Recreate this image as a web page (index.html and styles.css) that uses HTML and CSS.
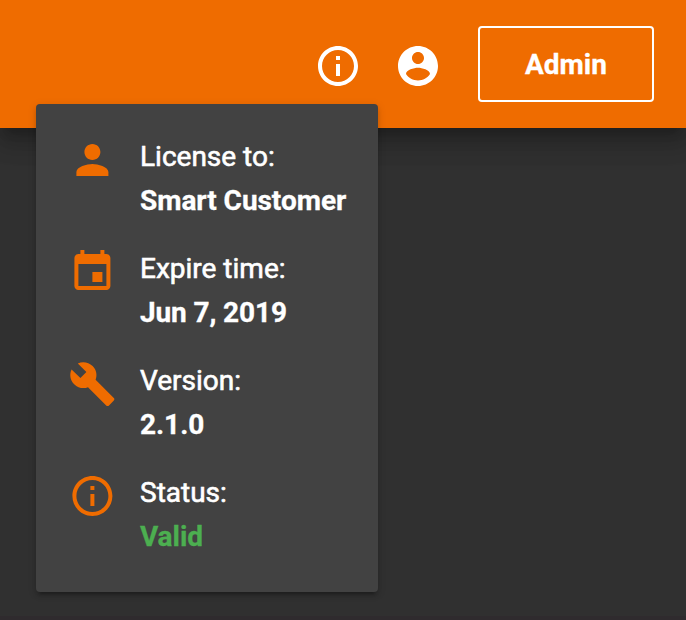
FILE: index.html
```html
<!DOCTYPE html>
<html lang="en">
<head>
<meta charset="utf-8">
<title>License information</title>
<link rel="stylesheet" href="styles.css">
</head>
<body>
<header class="toolbar">
  <svg class="icon" viewBox="0 0 24 24"><path d="M11 17h2v-6h-2v6zm1-15C6.480 2 2 6.480 2 12s4.480 10 10 10 10-4.480 10-10S17.520 2 12 2zm0 18c-4.410 0-8-3.590-8-8s3.590-8 8-8 8 3.590 8 8-3.590 8-8 8zM11 9h2V7h-2v2z"/></svg>
  <svg class="icon" viewBox="0 0 24 24"><path d="M12 2C6.480 2 2 6.480 2 12s4.480 10 10 10 10-4.480 10-10S17.520 2 12 2zm0 3c1.660 0 3 1.340 3 3s-1.340 3-3 3-3-1.340-3-3 1.340-3 3-3zm0 14.200c-2.500 0-4.710-1.280-6-3.220.030-1.990 4-3.080 6-3.080 1.990 0 5.970 1.090 6 3.080-1.290 1.940-3.500 3.220-6 3.220z"/></svg>
  <button class="admin">Admin</button>
</header>
<main class="content"></main>
<footer class="bottom"></footer>
<section class="card">
  <div class="row">
    <svg class="icon" viewBox="-.2 0 24 24"><path d="M12 12c2.210 0 4-1.790 4-4s-1.790-4-4-4-4 1.790-4 4 1.790 4 4 4zm0 2c-2.670 0-8 1.340-8 4v2h16v-2c0-2.660-5.330-4-8-4z"/></svg>
    <div class="text">License to:<strong>Smart Customer</strong></div>
  </div>
  <div class="row">
    <svg class="icon" viewBox="-.2 0 24 24"><path d="M17 12h-5v5h5v-5zM16 1v2H8V1H6v2H5c-1.110 0-1.990.900-1.990 2L3 19c0 1.100.890 2 2 2h14c1.100 0 2-.900 2-2V5c0-1.100-.900-2-2-2h-1V1h-2zm3 18H5V8h14v11z"/></svg>
    <div class="text">Expire time:<strong class="date">Jun 7, 2019</strong></div>
  </div>
  <div class="row">
    <svg class="icon" viewBox="-.2 0 24 24"><path d="M22.700 19l-9.100-9.100c.900-2.300.400-5-1.500-6.900-2-2-5-2.400-7.400-1.300L9 6 6 9 1.600 4.700C.400 7.100.900 10.100 2.900 12.100c1.900 1.900 4.600 2.400 6.900 1.500l9.100 9.100c.400.400 1 .400 1.400 0l2.300-2.300c.500-.400.500-1.100.100-1.400z"/></svg>
    <div class="text">Version:<strong>2.1.0</strong></div>
  </div>
  <div class="row">
    <svg class="icon" viewBox="-.2 0 24 24"><path d="M11 17h2v-6h-2v6zm1-15C6.480 2 2 6.480 2 12s4.480 10 10 10 10-4.480 10-10S17.520 2 12 2zm0 18c-4.410 0-8-3.590-8-8s3.590-8 8-8 8 3.590 8 8-3.590 8-8 8zM11 9h2V7h-2v2z"/></svg>
    <div class="text">Status:<strong class="valid">Valid</strong></div>
  </div>
</section>
</body>
</html>
```
FILE: styles.css
```css
* { box-sizing: border-box; }
body {
  margin: 0;
  height: 620px;
  overflow: hidden;
  position: relative;
  display: flex;
  flex-direction: column;
  background: #303030;
  color: #fff;
  font: 400 28px/44px Roboto, sans-serif;
}
.toolbar {
  height: 128px;
  flex: none;
  display: flex;
  justify-content: flex-end;
  align-items: flex-start;
  gap: 32px;
  padding: 26px 32px 0 0;
  background: #ef6c00;
  box-shadow: 0 10px 10px -6px rgba(0, 0, 0, .2), 0 16px 20px 2px rgba(0, 0, 0, .14), 0 6px 28px 4px rgba(0, 0, 0, .12);
}
.icon {
  width: 48px;
  height: 48px;
  flex: none;
  fill: currentColor;
}
.toolbar .icon { margin-top: 16px; }
.admin {
  width: 176px;
  height: 76px;
  margin-left: 4px;
  padding: 2px 0 0;
  border: 2px solid #fff;
  border-radius: 4px;
  background: transparent;
  color: #fff;
  font: 700 28px/70px Roboto, sans-serif;
  -webkit-text-stroke: .3px currentColor;
}
.content { flex: 1; }
.bottom { height: 4px; background: #2f2b2e; }
.card {
  position: absolute;
  left: 36px;
  top: 104px;
  width: 342px;
  height: 488px;
  padding: 31px 32px 29px;
  display: flex;
  flex-direction: column;
  gap: 24px;
  border-radius: 4px;
  background: #424242;
  box-shadow: 0 6px 2px -4px rgba(0, 0, 0, .2), 0 4px 4px rgba(0, 0, 0, .14), 0 2px 10px rgba(0, 0, 0, .12);
}
.row { display: flex; gap: 24px; }
.row .icon { color: #ef6c00; margin-top: 1px; }
.text {
  white-space: nowrap;
  -webkit-text-stroke: .6px currentColor;
}
.text strong {
  display: block;
  font-weight: 700;
  letter-spacing: -.04px;
  -webkit-text-stroke: .3px currentColor;
}
.text .date { letter-spacing: -.12px; }
.text .valid { color: #4caf50; }
```
